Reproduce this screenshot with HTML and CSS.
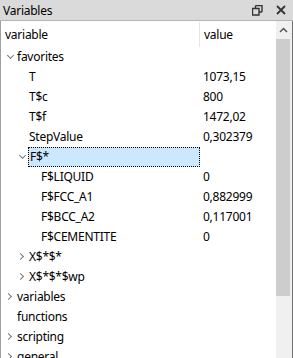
FILE: index.html
```html
<!DOCTYPE html>
<html lang="en">
<head>
    <meta charset="utf-8">
    <title>Variables</title>
    <link rel="stylesheet" href="styles.css">
</head>
<body>
    <div class="panel">
        <div class="titlebar">
            <span class="title">Variables</span>
            <span class="tbtn">
                <svg width="11" height="11" viewBox="0 0 11 11"><path d="M3.5 0.5h6.5v6.5M0.5 3.5h6.5v6.5h-6.5z M3.5 0.5v3 M10 7h-3" fill="none" stroke="#333" stroke-width="1.4"/></svg>
            </span>
            <span class="tbtn">
                <svg width="10" height="10" viewBox="0 0 10 10"><path d="M1 1l8 8M9 1l-8 8" stroke="#333" stroke-width="1.8"/></svg>
            </span>
        </div>
        <div class="body">
            <div class="tree">
                <div class="header">
                    <div class="hcell">variable</div>
                    <div class="hcell">value</div>
                </div>
                <div class="row lvl0"><span class="arrow open"></span><span class="name">favorites</span><span class="val"></span></div>
                <div class="row lvl1"><span class="arrow none"></span><span class="name">T</span><span class="val">1073,15</span></div>
                <div class="row lvl1"><span class="arrow none"></span><span class="name">T$c</span><span class="val">800</span></div>
                <div class="row lvl1"><span class="arrow none"></span><span class="name">T$f</span><span class="val">1472,02</span></div>
                <div class="row lvl1"><span class="arrow none"></span><span class="name">StepValue</span><span class="val">0,302379</span></div>
                <div class="row lvl1 selected"><span class="arrow open"></span><span class="name focus">F$*</span><span class="val"></span></div>
                <div class="row lvl2"><span class="arrow none"></span><span class="name">F$LIQUID</span><span class="val">0</span></div>
                <div class="row lvl2"><span class="arrow none"></span><span class="name">F$FCC_A1</span><span class="val">0,882999</span></div>
                <div class="row lvl2"><span class="arrow none"></span><span class="name">F$BCC_A2</span><span class="val">0,117001</span></div>
                <div class="row lvl2"><span class="arrow none"></span><span class="name">F$CEMENTITE</span><span class="val">0</span></div>
                <div class="row lvl1"><span class="arrow closed"></span><span class="name">X$*$*</span><span class="val"></span></div>
                <div class="row lvl1"><span class="arrow closed"></span><span class="name">X$*$*$wp</span><span class="val"></span></div>
                <div class="row lvl0"><span class="arrow closed"></span><span class="name">variables</span><span class="val"></span></div>
                <div class="row lvl0"><span class="arrow none"></span><span class="name">functions</span><span class="val"></span></div>
                <div class="row lvl0"><span class="arrow closed"></span><span class="name">scripting</span><span class="val"></span></div>
                <div class="row lvl0"><span class="arrow closed"></span><span class="name">general</span><span class="val"></span></div>
            </div>
            <div class="scrollbar">
                <div class="sbtn">
                    <svg width="9" height="6" viewBox="0 0 9 6"><path d="M1 5l3.5-3.5L8 5" fill="none" stroke="#555" stroke-width="1.5"/></svg>
                </div>
                <div class="thumb"></div>
                <div class="track"></div>
            </div>
        </div>
    </div>
</body>
</html>
```
FILE: styles.css
```css
body {
    margin: 0;
    font-family: "Noto Sans", "Open Sans", sans-serif;
    font-size: 12px;
    letter-spacing: -0.25px;
    color: #000;
    background: #fff;
}
.panel {
    width: 293px;
    height: 358px;
    display: flex;
    flex-direction: column;
    overflow: hidden;
}
.titlebar {
    height: 20px;
    background: #dadada;
    border-bottom: 1px solid #b4b4b4;
    display: flex;
    align-items: center;
    padding-left: 3px;
    flex-shrink: 0;
}
.title {
    flex: 1;
    font-size: 12px;
    color: #000;
}
.tbtn {
    width: 24px;
    display: flex;
    justify-content: center;
    align-items: center;
}
.body {
    flex: 1;
    display: flex;
    border-left: 1px solid #a0a0a0;
    border-right: 1px solid #6e6e6e;
    min-height: 0;
}
.tree {
    flex: 1;
    overflow: hidden;
}
.header {
    display: grid;
    grid-template-columns: 199px 1fr;
    height: 26px;
}
.hcell {
    display: flex;
    align-items: center;
    padding-left: 4px;
}
.hcell:first-child {
    border-right: 1px solid #e5e5e5;
    margin: 1px 0 0;
}
.row {
    display: flex;
    align-items: center;
    height: 20px;
}
.arrow {
    width: 12px;
    height: 20px;
    flex-shrink: 0;
    position: relative;
}
.arrow.open::before,
.arrow.closed::before {
    content: "";
    position: absolute;
    width: 4px;
    height: 4px;
    border-right: 1.5px solid #777;
    border-bottom: 1.5px solid #777;
}
.arrow.open::before {
    left: 4px;
    top: 6px;
    transform: rotate(45deg);
}
.arrow.closed::before {
    left: 2px;
    top: 7px;
    transform: rotate(-45deg);
}
.lvl0 .arrow { margin-left: 3px; }
.lvl1 .arrow { margin-left: 15px; }
.lvl2 .arrow { margin-left: 27px; }
.name {
    flex: 1;
    height: 20px;
    line-height: 20px;
    padding-left: 1px;
    box-sizing: border-box;
}
.val {
    width: 75px;
    padding-left: 3px;
    line-height: 20px;
    flex-shrink: 0;
    box-sizing: border-box;
}
.lvl0 .name { max-width: 184px; }
.lvl1 .name { max-width: 172px; }
.lvl2 .name { max-width: 160px; }
.selected .name,
.selected .val {
    background: #cce8ff;
}
.name.focus {
    border: 1px dotted #000;
    line-height: 18px;
}
.scrollbar {
    width: 16px;
    display: flex;
    flex-direction: column;
    background: #f0f0f0;
    border-right: 1px solid #f0f0f0;
    box-sizing: border-box;
    flex-shrink: 0;
}
.sbtn {
    height: 18px;
    display: flex;
    justify-content: center;
    align-items: center;
}
.thumb {
    height: 257px;
    background: #cdcdcd;
    margin: 0 1px 0 0;
}
.track {
    flex: 1;
}
```
